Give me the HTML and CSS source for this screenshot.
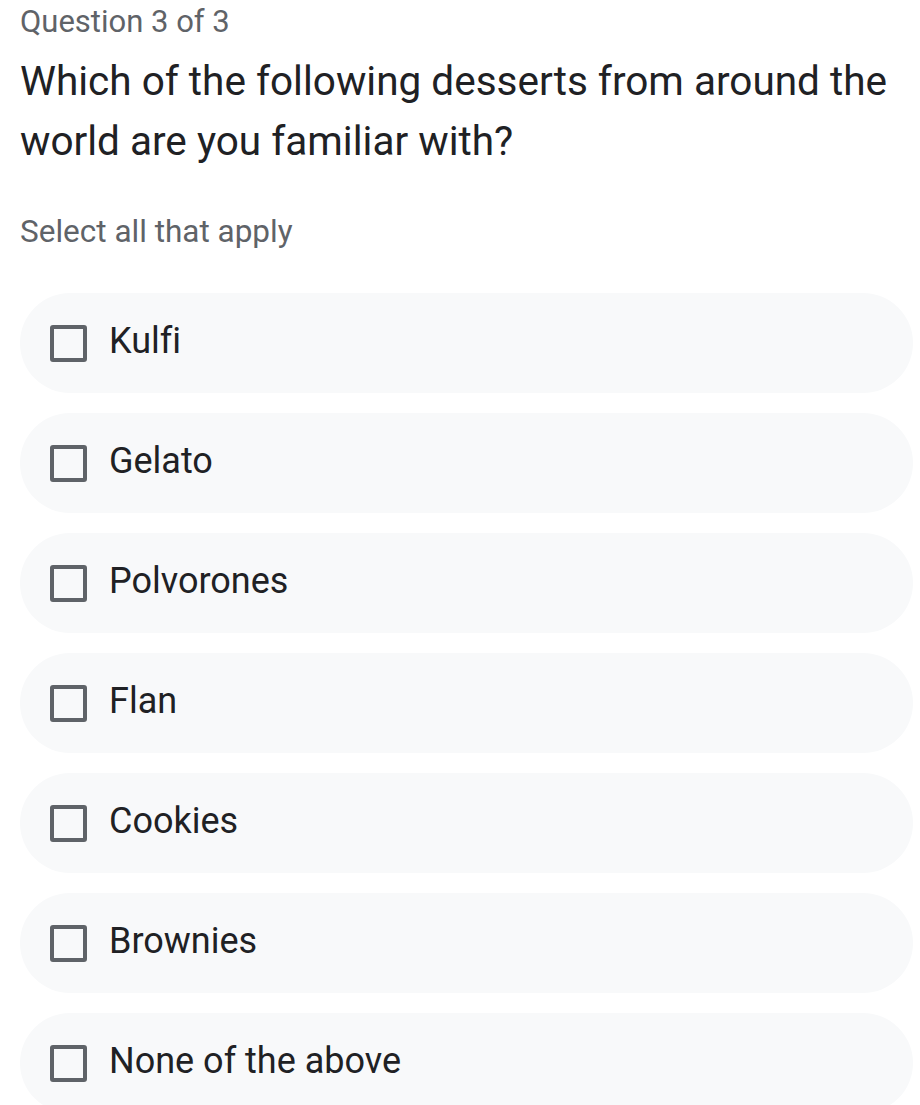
FILE: index.html
```html
<!DOCTYPE html>
<html lang="en">
<head>
    <meta charset="UTF-8">
    <meta name="viewport" content="width=device-width, initial-scale=1.0">
    <title>Question 3 of 3</title>
    <link rel="stylesheet" href="styles.css">
</head>
<body>
    <div class="quiz">
        <p class="counter">Question 3 of 3</p>
        <h1 class="question">Which of the following desserts from around the world are you familiar with?</h1>
        <p class="hint">Select all that apply</p>

        <ul class="options">
            <li><label><input type="checkbox"><span class="box"></span><span class="text">Kulfi</span></label></li>
            <li><label><input type="checkbox"><span class="box"></span><span class="text">Gelato</span></label></li>
            <li><label><input type="checkbox"><span class="box"></span><span class="text">Polvorones</span></label></li>
            <li><label><input type="checkbox"><span class="box"></span><span class="text">Flan</span></label></li>
            <li><label><input type="checkbox"><span class="box"></span><span class="text">Cookies</span></label></li>
            <li><label><input type="checkbox"><span class="box"></span><span class="text">Brownies</span></label></li>
            <li><label><input type="checkbox"><span class="box"></span><span class="text">None of the above</span></label></li>
        </ul>
    </div>
</body>
</html>
```

FILE: styles.css
```css
body {
    font-family: Roboto, "Liberation Sans", sans-serif;
    font-variant-ligatures: none;
    margin: 0;
    padding: 0;
    background-color: #fff;
    color: #202124;
}

.quiz {
    padding: 0 7px 0 20px;
}

.counter {
    margin: 0;
    padding-top: 4px;
    font-size: 31px;
    line-height: 36px;
    color: #5f6368;
}

.question {
    margin: 11px 0 0;
    font-size: 40.5px;
    font-weight: 400;
    line-height: 60px;
}

.hint {
    margin: 43px 0 0;
    font-size: 31.5px;
    line-height: 36px;
    color: #5f6368;
}

.options {
    list-style: none;
    margin: 43px 0 0;
    padding: 0;
}

.options li {
    margin-bottom: 20px;
}

.options label {
    display: flex;
    align-items: center;
    height: 100px;
    padding-left: 30px;
    background-color: #f8f9fa;
    border-radius: 50px;
    font-size: 36px;
    cursor: pointer;
}

.options input {
    display: none;
}

.box {
    width: 29px;
    height: 29px;
    border: 4px solid #5f6368;
    border-radius: 3px;
    margin-right: 22px;
    flex-shrink: 0;
}

.text {
    line-height: 42px;
    margin-bottom: 4px;
}

.options input:checked + .box {
    background-color: #1a73e8;
    border-color: #1a73e8;
}
```
